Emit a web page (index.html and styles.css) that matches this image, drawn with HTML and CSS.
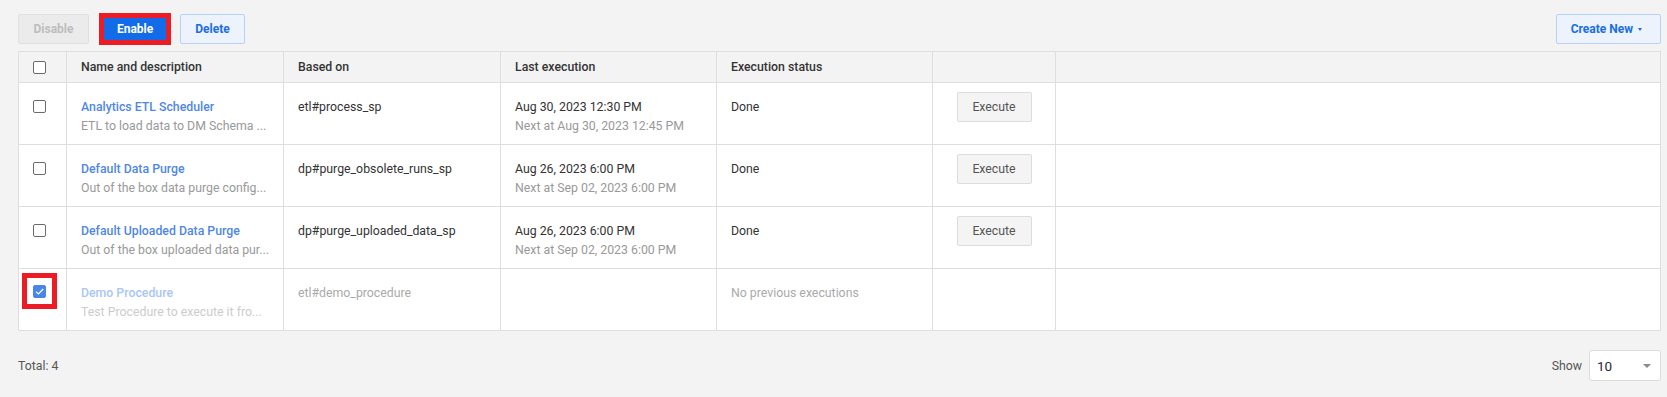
FILE: index.html
```html
<!DOCTYPE html>
<html>
    <head>
        <title>Procedures</title>
        <meta charset="utf-8" />
        <link rel="stylesheet" href="styles.css">
    </head>
    <body>

        <header class="toolbar">
            <div class="actions">
                <button class="btn btn-off">Disable</button>
                <button class="btn btn-primary marked">Enable</button>
                <button class="btn btn-light">Delete</button>
            </div>
            <button class="btn btn-light btn-create">Create New <span class="caret"></span></button>
        </header>

        <table class="grid">
            <colgroup>
                <col style="width: 48px">
                <col style="width: 217px">
                <col style="width: 217px">
                <col style="width: 216px">
                <col style="width: 216px">
                <col style="width: 123px">
                <col>
            </colgroup>
            <thead>
                <tr>
                    <th><span class="cb"></span></th>
                    <th>Name and description</th>
                    <th>Based on</th>
                    <th>Last execution</th>
                    <th>Execution status</th>
                    <th></th>
                    <th></th>
                </tr>
            </thead>
            <tbody>
                <tr>
                    <td><span class="cb"></span></td>
                    <td>
                        <div class="name">Analytics ETL Scheduler</div>
                        <div class="sub">ETL to load data to DM Schema ...</div>
                    </td>
                    <td>etl#process_sp</td>
                    <td>
                        <div>Aug 30, 2023 12:30 PM</div>
                        <div class="sub">Next at Aug 30, 2023 12:45 PM</div>
                    </td>
                    <td>Done</td>
                    <td class="act"><button class="exec">Execute</button></td>
                    <td></td>
                </tr>
                <tr>
                    <td><span class="cb"></span></td>
                    <td>
                        <div class="name">Default Data Purge</div>
                        <div class="sub">Out of the box data purge config...</div>
                    </td>
                    <td>dp#purge_obsolete_runs_sp</td>
                    <td>
                        <div>Aug 26, 2023 6:00 PM</div>
                        <div class="sub">Next at Sep 02, 2023 6:00 PM</div>
                    </td>
                    <td>Done</td>
                    <td class="act"><button class="exec">Execute</button></td>
                    <td></td>
                </tr>
                <tr>
                    <td><span class="cb"></span></td>
                    <td>
                        <div class="name">Default Uploaded Data Purge</div>
                        <div class="sub">Out of the box uploaded data pur...</div>
                    </td>
                    <td>dp#purge_uploaded_data_sp</td>
                    <td>
                        <div>Aug 26, 2023 6:00 PM</div>
                        <div class="sub">Next at Sep 02, 2023 6:00 PM</div>
                    </td>
                    <td>Done</td>
                    <td class="act"><button class="exec">Execute</button></td>
                    <td></td>
                </tr>
                <tr class="disabled">
                    <td>
                        <span class="mark"><span class="cb checked">
                            <svg width="9" height="7" viewBox="0 0 9 7"><path d="M1 3.6 L3.4 6 L8.2 1" fill="none" stroke="#fff" stroke-width="1.2"/></svg>
                        </span></span>
                    </td>
                    <td>
                        <div class="name">Demo Procedure</div>
                        <div class="sub">Test Procedure to execute it fro...</div>
                    </td>
                    <td>etl#demo_procedure</td>
                    <td></td>
                    <td>No previous executions</td>
                    <td></td>
                    <td></td>
                </tr>
            </tbody>
        </table>

        <footer class="pager">
            <span>Total: 4</span>
            <span class="show">
                Show
                <span class="select">10 <span class="arrow"></span></span>
            </span>
        </footer>

    </body>
</html>
```

FILE: styles.css
```css
html, body {
    margin: 0;
    padding: 0;
    background-color: #f3f3f3;
    color: #333;
    font-family: Roboto, "Liberation Sans", sans-serif;
    font-size: 12.3px;
}
body {
    padding: 14px 6px 0 18px;
}
.toolbar {
    display: flex;
    justify-content: space-between;
    align-items: center;
    height: 30px;
}
.actions {
    display: flex;
    align-items: center;
}
.btn {
    height: 30px;
    padding: 0 14px;
    margin-right: 9px;
    font-family: inherit;
    font-size: 12px;
    font-weight: 700;
    border: 1px solid;
    border-radius: 2px;
}
.btn-off {
    padding: 0 14.5px;
    color: #bdbdbd;
    background-color: #ebebeb;
    border-color: #e0e0e0;
    margin-right: 10px;
}
.btn-primary {
    color: #fff;
    background-color: #126be8;
    border-color: #126be8;
}
/* red highlight box around the enable button */
.btn-primary.marked {
    height: 32px;
    padding: 0 13px;
    border: 5px solid #ec1c24;
    border-radius: 0;
}
.btn-light {
    color: #1a6de6;
    background-color: #edf3fd;
    border-color: #b9d1f7;
}
.btn-create {
    margin-right: 0;
    padding: 0 18px 0 14px;
}
.caret {
    display: inline-block;
    vertical-align: middle;
    margin-left: 2px;
    border-left: 2.5px solid transparent;
    border-right: 2.5px solid transparent;
    border-top: 3px solid #1a6de6;
}
.grid {
    width: 100%;
    margin-top: 7px;
    border-collapse: collapse;
    table-layout: fixed;
}
.grid th, .grid td {
    border: 1px solid #dedede;
    text-align: left;
    white-space: nowrap;
    overflow: hidden;
}
.grid th {
    height: 30px;
    padding: 0 14px;
    font-weight: 500;
    color: #333;
    background-color: #f3f3f3;
}
.grid td {
    vertical-align: top;
    padding: 15px 12px 8px 14px;
    line-height: 19px;
    background-color: #fff;
}
.grid td.act {
    padding: 9px 0 0;
    text-align: center;
}
.name {
    color: #4f87e4;
    font-weight: 500;
}
.sub {
    color: #999;
}
.cb {
    display: inline-flex;
    justify-content: center;
    align-items: center;
    box-sizing: border-box;
    width: 13px;
    height: 13px;
    border: 1.5px solid #6b6b6b;
    border-radius: 2px;
    background-color: #fff;
    vertical-align: middle;
}
.grid td .cb {
    vertical-align: top;
    margin-top: 2px;
}
.cb.checked {
    background-color: #4a86e8;
    border-color: #4a86e8;
}
.mark {
    display: inline-block;
    vertical-align: top;
    margin: -11px 0 0 -11px;
    padding: 7px 6px 6px;
    border: 5px solid #ec1c24;
    background-color: #fff;
    line-height: 0;
}
.grid td .mark .cb {
    margin-top: 0;
}
.exec {
    width: 75px;
    height: 30px;
    font-family: inherit;
    font-size: 12.3px;
    color: #555;
    background-color: #f4f4f4;
    border: 1px solid #dcdcdc;
    border-radius: 2px;
}
.disabled td {
    color: #aaa;
}
.disabled .name {
    color: #a9c6f6;
}
.disabled .sub {
    color: #ccc;
}
.pager {
    display: flex;
    justify-content: space-between;
    align-items: center;
    margin-top: 19px;
    height: 31px;
    color: #555;
}
.show {
    display: flex;
    align-items: center;
}
.select {
    display: flex;
    justify-content: space-between;
    align-items: center;
    box-sizing: border-box;
    width: 72px;
    height: 31px;
    margin-left: 7px;
    padding: 0 9px 0 7px;
    font-size: 13.5px;
    color: #1d2733;
    background-color: #fff;
    border: 1px solid #dcdcdc;
    border-radius: 3px;
}
.arrow {
    border-left: 4px solid transparent;
    border-right: 4px solid transparent;
    border-top: 4px solid #8a8a8a;
}
```
